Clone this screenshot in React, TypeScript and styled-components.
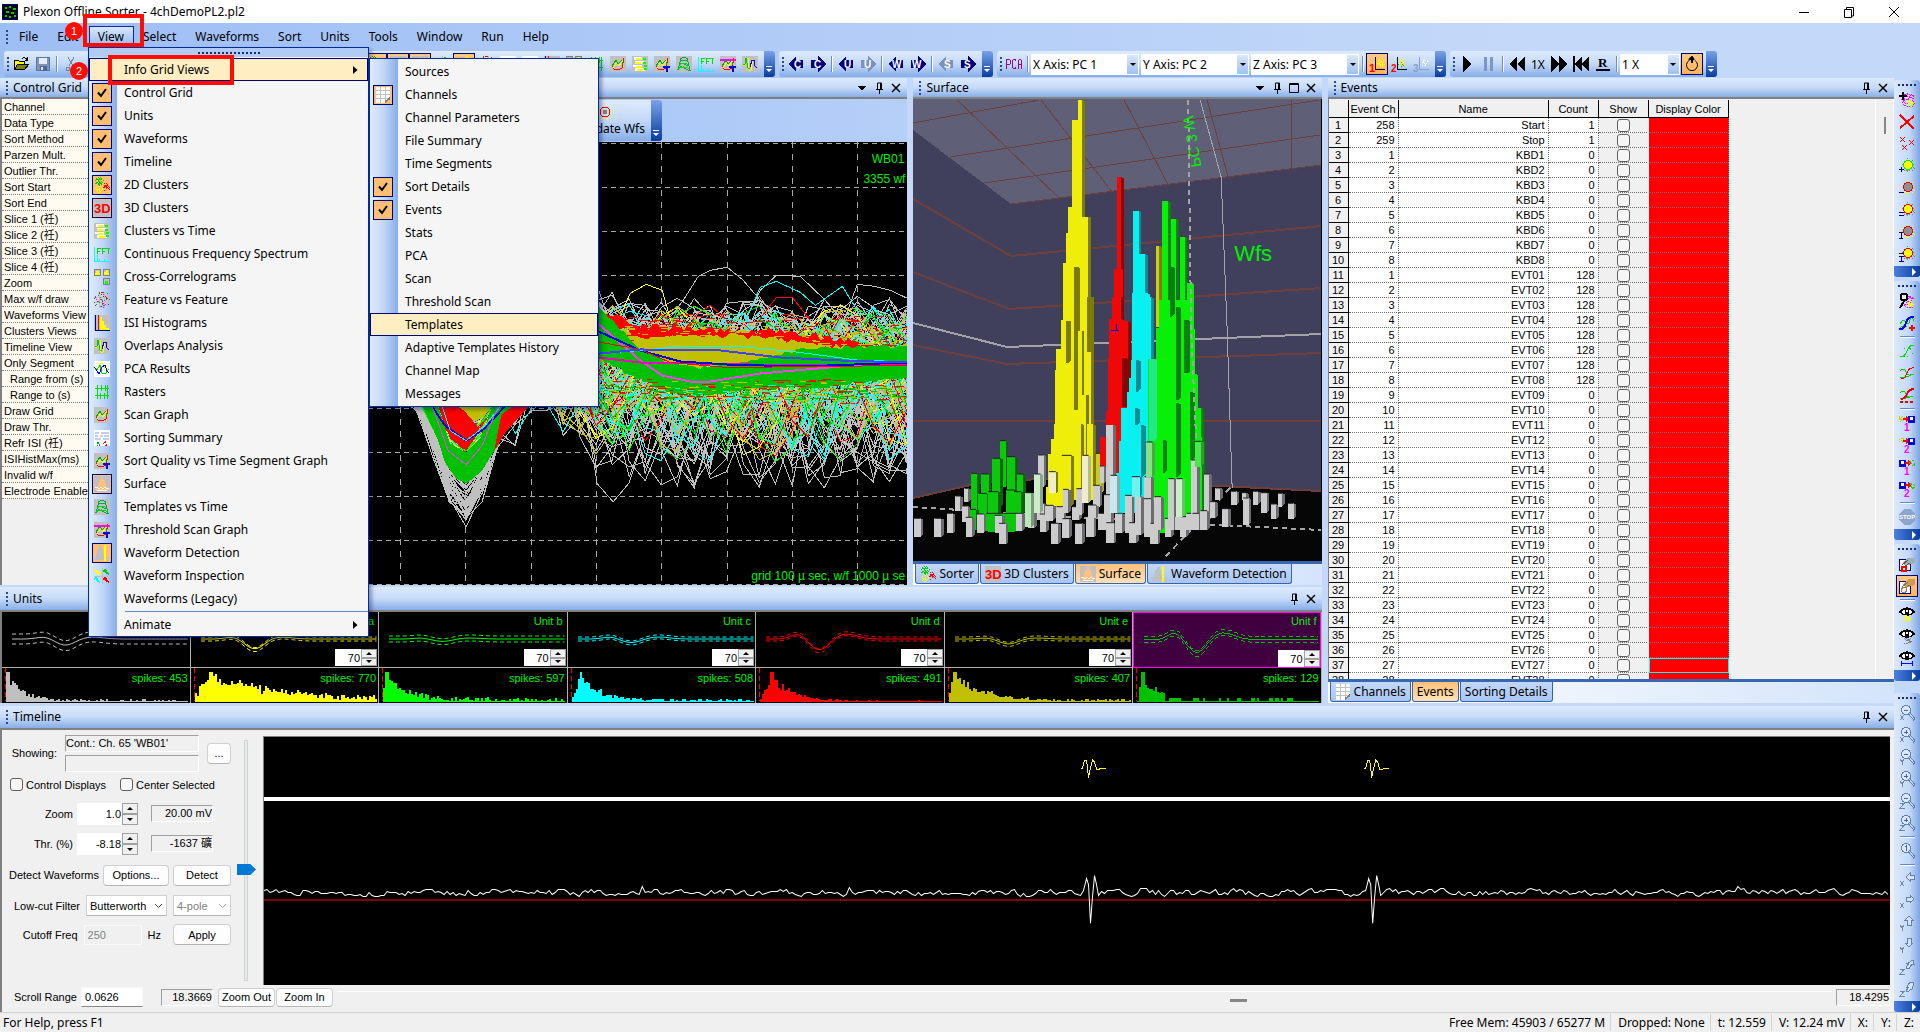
import React from "react";
import styled, { createGlobalStyle, css } from "styled-components";

const UI = `"Noto Sans", "Open Sans", sans-serif`;
const SANS = `"Liberation Sans", "Noto Sans CJK SC", sans-serif`;

const GlobalStyle = createGlobalStyle`
  * { box-sizing: border-box; }
  body { margin: 0; background: #c4d9f9; font-family: ${UI}; font-size: 12px; color: #000; overflow: hidden; }
  button, input, select { font: inherit; color: inherit; margin: 0; padding: 0; }
  button { border: 0; background: none; }
  h1, h2, ul, p { margin: 0; padding: 0; font-size: inherit; font-weight: 400; list-style: none; }
`;

/* ---------- seeded random numbers, so the traces are stable ---------- */
function rng(seed: number) {
  let s = seed >>> 0;
  return () => {
    s = (s + 0x6d2b79f5) >>> 0;
    let t = Math.imul(s ^ (s >>> 15), 1 | s);
    t = (t + Math.imul(t ^ (t >>> 7), 61 | t)) ^ t;
    return ((t ^ (t >>> 14)) >>> 0) / 4294967296;
  };
}

/* ---------- icons ---------- */
type Dot = [number, number];
const scatter = (seed: number, n: number, color: string, cx: number, cy: number, r: number) => {
  const rand = rng(seed);
  const pts: Dot[] = [];
  for (let i = 0; i < n; i++) {
    const a = rand() * 6.28;
    const d = Math.sqrt(rand()) * r;
    pts.push([Math.round(cx + Math.cos(a) * d), Math.round(cy + Math.sin(a) * d)]);
  }
  return <path key={color + seed} fill={color} d={pts.map(([x, y]) => `M${x} ${y}h1v1h-1z`).join("")} />;
};
const st = (d: string, stroke: string, w = 1) => <path key={d + stroke} d={d} stroke={stroke} strokeWidth={w} fill="none" />;
const fl = (d: string, fill: string) => <path key={d + fill} d={d} fill={fill} />;
const txt = (t: string, x: number, y: number, size: number, color: string) => (
  <text x={x} y={y} fontSize={size} fontWeight="bold" fontFamily="Liberation Sans, sans-serif" fill={color}>{t}</text>
);
const GREY = fl("M0 0h16v16H0z", "#c0c0c0");
const scanLines = <>{st("M2 9l2 4 4 1 4-2 2-10", "#f00")}{st("M2 10l4-6 2 4 4-4 1 5", "#0a0")}{st("M3 12l3-5 3 3 4-6", "#ff0")}</>;
const tMark = fl("M9 10h7v2h-2v4h-2v-4H9z", "#00f");
const lens = (mark: string) => (
  <>
    <circle cx="7" cy="5" r="4.500" fill="#dbe7f8" stroke="#5f7fb8" />
    {st("M10 8l6 7", "#5f7fb8", 3)}
    {st("M10 8l5 6", "#c5d7f2")}
    {st(mark, "#46659c")}
  </>
);
const letterX = st("M1 10l4 5M5 10l-4 5", "#6f86ae");
const letterY = st("M1 10l2 3 2-3M3.500 13v3", "#6f86ae");
const letterZ = st("M1 10.500h4l-4 4.500h5", "#6f86ae");
const arrowR = "M7 4h4V2l4 4-4 4V8H7z";
const arrowL = "M15 4h-4V2L7 6l4 4V8h4z";
const arrowU = "M8 10V5H6l4-4 4 4h-2v5z";
const arrowD = "M8 1v5H6l4 4 4-4h-2V1z";
const arrowZU = "M7 9l3-5H9l5-3 1 4h-2l-3 5z";
const pale = (d: string) => <path d={d} fill="#d8e1ee" stroke="#6080b4" />;
const disk = (x: number) => <>{fl(`M${x} 1h7v7h-7z`, "#00f")}{fl(`M${x + 2} 2h3v3h-3z`, "#fff")}{fl(`M${x + 2} 6h2v1h-2z`, "#000")}</>;
const blob = (ring: string, core: string, outer: string, mark: string) => (
  <>
    {scatter(4, 26, outer, 9, 7, 7)}
    <circle cx="9" cy="7" r="4.500" fill={core} stroke={ring} />
    {st(mark, "#000080")}
  </>
);
const eye = <>{st("M1 6q7-7 14 0q-7 6-14 0z", "#000", 2)}{fl("M2 6q6-5 12 0q-6 5-12 0z", "#fff")}{fl("M6 3h4v5H6z", "#000")}{fl("M7 4h2v2H7z", "#fff")}</>;

const ICONS: Record<string, React.ReactNode> = {
  app: <>{fl("M0 0h16v16H0z", "#000080")}{fl("M1 1h14v14H1z", "#000")}{fl("M3 3h2v2H3zM7 2h2v2H7zM11 4h3v2h-3zM4 7h3v2H4zM9 8h3v2H9zM3 11h2v2H3zM7 12h2v2H7zM12 11h2v2h-2z", "#0c0")}</>,
  open: <>{st("M1.500 13.500v-9h4l1 1h5v3", "#000")}{fl("M2 5h3l1 1h5v2H4l-2 4z", "#ff0")}<path d="M1.500 13.500l3-5h11l-4 5z" fill="#808000" stroke="#000" />{st("M9 2.500q3-2 5 1M14.500 1v3h-3", "#000")}</>,
  save: <><path d="M1.500 1.500h13v13h-13z" fill="#7f93b5" stroke="#5d74a0" />{fl("M4 2h8v6H4z", "#e3ecfa")}{fl("M5 10h7v5H5z", "#4e6794")}{fl("M6 11h2v3H6z", "#dce8fa")}</>,
  cut: <>{st("M5 1l5 9M11 1l-5 9", "#7086ac", 1)}{st("M3 11h3v3H3zM10 11h3v3h-3z", "#7086ac")}</>,
  clusters: <>{scatter(1, 34, "#0c0", 5, 4, 4)}{scatter(2, 30, "#f00", 11, 10, 4)}{scatter(3, 26, "#ff0", 5, 12, 4)}</>,
  three: <>{GREY}{txt("3D", 0, 13, 13, "#f00")}</>,
  clustime: <>{GREY}{fl("M2 1h8v3H2zM3 5h9v3H3zM1 9h9v2H1zM3 12h10v3H3z", "#fff")}{st("M4 2.500h5M3 6.500h6M4 10.500h6M5 13.500h6", "#ff0", 2)}{st("M11 3h3M11 7h3M12 10h3M12 13h3", "#0f0", 2)}</>,
  fft: <>{st("M.500 1v14.500H16M3.500 9v6M5.500 13v2M10.500 13v2", "#0ff")}{st("M3.500 8V2.500h3M3.500 5.500h2M8.500 8V2.500h3M8.500 5.500h2M12 2.500h4M14.500 2v6", "#0d0")}</>,
  cross: <>{fl("M0 0h7v7H0zM9 0h7v7H9zM9 9h7v7H9z", "#808080")}{fl("M1 1h5v5H1zM10 1h5v5h-5zM10 10h5v5h-5z", "#c0c0c0")}{fl("M1 4h1V2h3v2h1v2H1zM10 3h2V1h2v3h1v2h-5z", "#ff0")}{fl("M11 12h3v3h-3z", "#0f0")}</>,
  fvf: <>{st("M0 5.500h16M0 10.500h16M5.500 0v16M10.500 0v16", "#c0c0c0")}{scatter(5, 20, "#f00", 8, 8, 9)}{scatter(6, 20, "#0a0", 8, 8, 9)}{scatter(7, 14, "#f0f", 8, 8, 9)}</>,
  isi: <>{GREY}{st("M1.500 0v15.500H16", "#000080")}{fl("M6 2h2v4h2v4h2v3h3v2H6z", "#ff0")}{st("M4.500 0v15", "#f00")}</>,
  overlaps: <>{GREY}{st("M1 9h2l1-7h2l1 12h2l1-10 1 4", "#ff0")}{st("M1 8h2l1-6 2 10 2 1", "#0c0")}{st("M8 11l2-7h2l1 6 2 2", "#00f")}</>,
  pca: <>{fl("M0 0h16v16H0z", "#fff")}{st("M0 7h4l2-5 3 0 2 7", "#ff0")}{st("M1 8l2 1 3-5 2 8 3 1 4-5", "#0c0")}{st("M0 6l2 2 3 5 3-7 3-2 2 6 2 2", "#00f")}</>,
  rasters: <>{st("M1 4.500h14M1 11.500h14", "#0d0")}{st("M3.500 1v14M7.500 1v6M6.500 9v6M11.500 1v6M10.500 9v6M13.500 1v14", "#0d0")}</>,
  scan: <>{GREY}{scanLines}</>,
  summary: <>{fl("M0 0h16v16H0z", "#fff")}{st("M1 2.500h4M7 2.500h8M1 5.500h3M6 5.500h3M10 5.500h5M1 8.500h6M9 8.500h6", "#c0d0e8", 2)}{scatter(8, 10, "#0a0", 4, 13, 2)}{scatter(9, 10, "#f00", 11, 13, 2)}</>,
  sortq: <>{GREY}{scanLines}{tMark}</>,
  surface: <>{fl("M0 0h16v16H0z", "#c0c0c0")}{fl("M2 15v-4h2V7h1V4h2V1h2v3h2v3h1v4h2v4z", "#ffc080")}{st("M1 12l2-1 2 2 2-2 2 2 2-2 2 2 2-1M3 14h10", "#fff")}</>,
  templ: <>{GREY}{st("M5 3q3-3 6 0M4 6q4-4 8 0M3 10q2-4 5-2t5 2M1 14q3-5 7-2t7 2M5 2l-3 12M11 2l3 12", "#0a4")}{st("M4 9q4-4 8 0M2 13q5-4 12 0", "#0d0")}</>,
  thrscan: <>{GREY}{scanLines}{tMark}{st("M0 3.500h16", "#f0f", 2)}</>,
  wfdet: <>{fl("M0 15v-3h2V9h1V4h2V1h3v3h1v5h2v3h1v3z", "#c0c0c0")}{st("M10.500 0v16", "#ff0", 2)}{st("M12 12h2v3h-2z", "#c0c0c0")}</>,
  inspect: <>{st("M0 8.500h16M8.500 0v16", "#c0c0c0")}{st("M0 2l2 1 2 3 2-2", "#ff0", 2)}{st("M9 4l2-2 2 3 2 1", "#0c0", 2)}{st("M0 11l2-1 2 3 2 1", "#0ff", 2)}{st("M9 12l2-2 2 3 2 1", "#f00", 2)}</>,
  sheet: <>{fl("M1 0h14v11l-5 5H1z", "#fff")}{st("M1 3.500h14M1 7.500h14M1 11.500h14M5.500 0v16M10.500 0v16", "#c0c0c0")}{st("M10 15l5-4", "#808080", 2)}</>,
  pcaText: <>{st("M.500 13V3.500h3l1 1v3l-1 1h-3M10 4.500l-1-1H7.500l-1 1v7l1 1H9l1-1M12.500 13V4.500l1-1h1l1 1V13M12.500 8.500h3", "#a000a0")}</>,
  play: fl("M4 0l9 8-9 8z", "#000"),
  pause: fl("M3 1h3v14H3zM9 1h3v14H9z", "#7c95c4"),
  rewind: fl("M8 0v16L0 8zM16 0v16L8 8z", "#000"),
  forward: fl("M0 0v16l8-8zM8 0v16l8-8z", "#000"),
  start: fl("M0 0h2v16H0zM9 0v16L2 8zM16 0v16L9 8z", "#000"),
  rec: <><text x="3" y="11" fontSize="13" fontWeight="bold" fontFamily="Liberation Serif, serif">R</text>{fl("M1 13h14v2H1z", "#000")}</>,
  loop: <g shapeRendering="auto">{st("M5 4.500A5.500 5.500 0 1 0 11 4.500", "#000", 1)}{st("M8 7V2M5 4l3-3 2 3", "#000", 2)}</g>,
  ax1: <>{st("M6.500 1v12.500H16", "#000")}{scatter(21, 34, "#ff0", 12, 6, 4)}{txt("1", 0, 16, 11, "#f00")}</>,
  ax2: <>{st("M6.500 1v12.500H16", "#000")}{scatter(22, 20, "#ff0", 11, 6, 4)}{scatter(23, 5, "#0c0", 11, 8, 4)}{txt("2", 0, 16, 10, "#f00")}</>,
  ax3: <>{st("M6.500 1v12.500H16", "#8aa0c8")}{scatter(24, 16, "#fff", 11, 6, 4)}{txt("3", 0, 16, 10, "#8aa0c8")}</>,
  addUnit: <>{scatter(31, 50, "#f0f", 9, 8, 7)}{scatter(32, 28, "#ff0", 11, 11, 3)}{fl("M3 0h2v3h3v2H5v3H3V5H0V3h3z", "#000")}</>,
  del: st("M1 1l14 14M15 2L1 14", "#f00", 2),
  delAll: <>{st("M1 1l5 5M6 1L1 6M10 4l5 5M15 4l-5 5M3 9l5 5M8 9l-5 5", "#e00")}</>,
  b1: blob("#0e0", "#ff0", "#808080", "M0 11.500h5M2.500 9v5"),
  b2: blob("#e00", "#909090", "#ff0", "M0 12.500h5"),
  b3: blob("#e00", "#ff0", "#808080", "M0 10.500h5M0 13.500h5"),
  b4: blob("#e00", "#909090", "#ff0", "M0 8.500h4M2 9v5M0 14.500h4"),
  b5: blob("#e00", "#ff0", "#808080", "M0 7.500h5M0 10.500h5M2.500 10v5M0 15.500h5"),
  findUnit: <>{scatter(33, 40, "#f0f", 10, 9, 6)}{scatter(34, 24, "#ff0", 11, 11, 3)}<circle cx="5" cy="4" r="3.500" fill="#eee" stroke="#000" strokeWidth="2" />{st("M5 8l-4 7", "#000", 2)}</>,
  wfAdd: <>{st("M1 9q3-6 6-2t4-2 4 1", "#0c0")}{st("M1 13q4-4 7-1", "#0c0")}{st("M0 14q5 1 7-6t8-6", "#00f", 2)}{st("M10 12.500h6M13 10v6", "#f00", 2)}</>,
  wf1: <>{st("M1 14q5 0 7-6t7-6", "#0d0")}{scatter(41, 10, "#0d0", 8, 8, 6)}</>,
  wf2: <>{st("M1 6q4-4 6 1t7 2M1 13q5 0 9-2t5-1", "#0c0")}{st("M2 14q4 0 6-6t7-5", "#e00")}</>,
  wf3: <>{st("M1 6q4-4 6 1t7 2M1 12q5 0 9-2", "#0c0")}{st("M2 12q4 0 6-5t7-5M1 14.500h3M6 14.500h3M11 14.500h3", "#e00", 2)}</>,
  out1: <>{scatter(51, 14, "#cc0", 2, 3, 3)}{fl("M4 3h3V1l3 3-3 3V5H4z", "#f00")}{disk(9)}{txt("1", 5, 16, 10, "#f0f")}</>,
  out2: <>{scatter(52, 14, "#cc0", 2, 3, 3)}{fl("M4 3h3V1l3 3-3 3V5H4z", "#f00")}{disk(9)}{txt("2", 5, 16, 10, "#f0f")}</>,
  in1: <>{disk(0)}{fl("M6 3h3V1l3 3-3 3V5H6z", "#f00")}{scatter(53, 16, "#3c0", 13, 4, 3)}{txt("1", 5, 16, 10, "#f0f")}</>,
  in2: <>{disk(0)}{fl("M6 3h3V1l3 3-3 3V5H6z", "#f00")}{scatter(54, 16, "#3c0", 13, 4, 3)}{txt("2", 5, 16, 10, "#f0f")}</>,
  stop: <>{fl("M5 0h6l5 5v6l-5 5H5l-5-5V5z", "#8da4cc")}{txt("STOP", 0, 10, 6, "#fff")}</>,
  prop1: <><path d="M.500 3.500h11v11H.500z" fill="#fff" stroke="#000080" />{fl("M3 7l5-5h8v5l-4 1-5 2z", "#9fb0b0")}{st("M3 9l6-5M6 10l5-3", "#555")}<circle cx="5" cy="13" r="2.500" fill="#fff" stroke="#f00" strokeWidth="2" /></>,
  prop2: <><path d="M.500 3.500h11v12H.500z" fill="#fff" stroke="#000080" />{fl("M4 6l5-5h7v6l-4 1-5 2z", "#d29a50")}{st("M3 9l6-5M6 10l5-3", "#777")}<circle cx="5" cy="12" r="2.500" fill="#eed" stroke="#976" /></>,
  eye1: <>{eye}{scatter(61, 36, "#ff0", 7, 13, 4)}</>,
  eye2: <>{eye}{scatter(62, 26, "#808080", 8, 13, 5)}</>,
  eye3: <>{eye}{st("M2.500 11v5M13.500 11v5M2 13.500h12", "#00f")}</>,
  zxo: <>{lens("M5 5.500h4")}{letterX}</>,
  zxi: <>{lens("M5 5.500h4M7.500 3v4")}{letterX}</>,
  zyo: <>{lens("M5 5.500h4")}{letterY}</>,
  zyi: <>{lens("M5 5.500h4M7.500 3v4")}{letterY}</>,
  zzo: <>{lens("M5 5.500h4")}{letterZ}</>,
  zzi: <>{lens("M5 5.500h4M7.500 3v4")}{letterZ}</>,
  z1: <>{lens("M7.500 2v6M6 3.500h1")}</>,
  mxl: <>{pale(arrowL)}{letterX}</>,
  mxr: <>{pale(arrowR)}{letterX}</>,
  myu: <>{pale(arrowU)}{letterY}</>,
  myd: <>{pale(arrowD)}{letterY}</>,
  mzu: <>{pale(arrowZU)}{letterZ}</>,
  mzd: <>{pale("M11 1l-3 5h2l-3 4 1 1 5-3 2-6z")}{letterZ}</>,
  inval: <>{scatter(71, 30, "#ff0", 8, 8, 8)}<circle cx="8" cy="8" r="5" fill="#ddd" stroke="#e00" />{fl("M6 6h4v4H6z", "#808080")}</>,
};
["C", "U", "W", "S"].forEach((l) => {
  const make = (right: boolean, color: string) => (
    <>
      {fl(right ? "M1 4h7V0l8 8-8 8v-4H1z" : "M15 4H8V0L0 8l8 8v-4h7z", color)}
      {txt(l, (l === "W" ? 4 : 6) - (right ? 2 : 0), 12, 10, "#fff")}
    </>
  );
  ICONS["l" + l] = make(false, l === "S" ? "#7d91bf" : "#000080");
  ICONS["r" + l] = make(true, l === "U" ? "#7d91bf" : "#000080");
});

const Glyph = styled.svg`display: block; flex: none; width: 16px; height: 16px;`;
const Icon = ({ name }: { name: string }) => (
  <Glyph viewBox="0 0 16 16" shapeRendering="crispEdges" aria-hidden="true">{ICONS[name]}</Glyph>
);

/* ---------- frame ---------- */
const Page = styled.div`position: relative; display: flex; flex-direction: column; height: 100vh; overflow: hidden;`;
const TitleBar = styled.header`
  display: flex; align-items: center; height: 23px; flex: none; background: #fff; padding: 0 20px 0 2px; gap: 5px;
  h1 { flex: 1; font-size: 12px; }
`;
const WindowButtons = styled.div`display: flex; gap: 33px;`;
const WinButton = styled.button`width: 12px; height: 20px; svg { display: block; width: 12px; height: 12px; }`;
const Grip = styled.span<{ $wide?: boolean }>`
  flex: none; width: 2px; height: 14px;
  background: repeating-linear-gradient(#2b4a86 0 2px, transparent 2px 4px);
  ${(p) => p.$wide && css`
    width: 18px; height: 2px;
    background: repeating-linear-gradient(90deg, #16306a 0 2px, transparent 2px 4px);
  `}
`;
const MenuBar = styled.nav`
  display: flex; align-items: center; flex: none; height: 28px; padding: 0 6px;
  background: linear-gradient(90deg, #9dbdf5, #c4d9f9 80%);
  > ${Grip} { margin-right: 2px; }
`;
const MenuButton = styled.button<{ $open?: boolean }>`
  height: 23px; padding: 0 9px 0 8px; border: 1px solid transparent; line-height: 20px;
  ${(p) => p.$open && css`border-color: #002d96; background: linear-gradient(#d9e7fc, #8fb3ec);`}
`;
const ToolRow = styled.div`
  display: flex; flex: none; height: 27px; padding-left: 4px; gap: 4px;
  background: linear-gradient(90deg, #9dbdf5, #c4d9f9 80%);
`;
const ToolBar = styled.div<{ $grow?: boolean }>`
  display: flex; align-items: center; gap: 6px; height: 26px; padding-left: 3px;
  border-radius: 3px; background: linear-gradient(#deebfd, #c3d8f7 50%, #86aee8);
  ${(p) => p.$grow && css`flex: 0 0 771px;`}
  > ${Grip} { margin-right: -2px; }
`;
const Spring = styled.span`flex: 1;`;
const ToolButton = styled.button<{ $on?: boolean }>`
  display: flex; flex: none; align-items: center; justify-content: center; width: 22px; height: 22px; margin: 0 -3px;
  border: 1px solid ${(p) => (p.$on ? "#000080" : "transparent")};
  background: ${(p) => (p.$on ? "linear-gradient(#ffc987, #ffb35c)" : "none")};
`;
const ToolSep = styled.span`flex: none; width: 2px; height: 16px; margin: 0 -1px; background: linear-gradient(90deg, #6a8ccb 50%, #fff 50%);`;
const MoreButton = styled.button`
  flex: none; align-self: stretch; width: 11px; display: flex; align-items: flex-end; justify-content: center; padding-bottom: 4px;
  background: linear-gradient(#79a2ea, #0a3d9c); border-radius: 0 3px 3px 0;
  svg { width: 7px; height: 7px; }
`;
const More = () => (
  <MoreButton aria-label="Toolbar options"><svg viewBox="0 0 7 7"><path d="M0 0h6v1H0zM0 3h6l-3 3z" fill="#fff" /></svg></MoreButton>
);
const Combo = styled.label<{ $w: number; $end?: boolean }>`
  display: flex; flex: none; width: ${(p) => p.$w}px; height: 21px; background: #fff; align-items: center;
  margin-right: ${(p) => (p.$end ? -2 : -4)}px;
  ${ToolSep} + & { margin-left: -3px; }
  select { appearance: none; flex: 1; min-width: 0; border: 0; background: none; padding-left: 2px; outline: 0; }
`;
const ComboArrow = styled.span`
  display: flex; align-items: center; justify-content: center; width: 11px; height: 19px; margin-right: 1px;
  background: linear-gradient(#d9e8fc, #9fc0ef);
  &::after { content: ""; border: 3px solid transparent; border-top-color: #000; border-bottom: 0; }
`;
const ToolCombo = ({ w, label, value, end }: { w: number; label: string; value: string; end?: boolean }) => (
  <Combo $w={w} $end={end}><select aria-label={label} defaultValue={value}><option>{value}</option></select><ComboArrow /></Combo>
);

/* ---------- docking panels ---------- */
const Workspace = styled.div`flex: 1; min-height: 0; display: grid; grid-template-columns: minmax(0, 1fr) 26px;`;
const Docks = styled.main`display: flex; flex-direction: column; min-height: 0;`;
const Upper = styled.div`
  flex: 1; min-height: 0; display: grid; grid-template-columns: minmax(0, 70fr) minmax(0, 30fr); gap: 6px; padding-bottom: 3px;
`;
const LeftDock = styled.div`display: flex; flex-direction: column; gap: 2px; min-height: 0;`;
const DockRow = styled.div`
  flex: 1; min-height: 0; display: grid; gap: 6px; grid-template-columns: 200px minmax(0, 701fr) minmax(0, 408fr);
`;
const Panel = styled.section`display: flex; flex-direction: column; min-height: 0; min-width: 0;`;
const CaptionBar = styled.header<{ $h: number }>`
  display: flex; align-items: center; gap: 5px; flex: none; height: ${(p) => p.$h}px; padding: 0 5px 0 6px;
  border-bottom: 2px solid #808080; background: linear-gradient(#dce9fc, #c6dbf8 50%, #88aee8);
  h2 { flex: 1; line-height: 18px; }
`;
const CaptionButton = styled.button`width: 12px; height: 14px; svg { display: block; width: 12px; height: 14px; }`;
const CAPTION_PATHS: Record<string, string> = {
  Menu: "M2 5.500h8M3 6.500h6M4 7.500h4M5 8.500h2",
  Pin: "M4.500 8V2h4v6M7.500 2v6M3 8.500h7M6.500 9v4",
  Maximize: "M1.500 2.500h9v9h-9zM1 3.500h10",
  Close: "M2 3l8 8M10 3l-8 8",
};
const Caption = ({ title, tools, h = 21 }: { title: string; tools: string[]; h?: number }) => (
  <CaptionBar $h={h}>
    <Grip /><h2>{title}</h2>
    {tools.map((t) => (
      <CaptionButton key={t} aria-label={t}>
        <svg viewBox="0 0 12 14"><path d={CAPTION_PATHS[t]} stroke="#000" strokeWidth={t === "Close" ? 1.5 : 1} fill="none" /></svg>
      </CaptionButton>
    ))}
  </CaptionBar>
);

const PropertyList = styled.ul`
  flex: 1; background: #f0f0f0; border-left: 2px solid #808080; font: 11px/15px ${SANS};
`;
const Property = styled.li<{ $sub?: boolean }>`
  height: 16px; padding-top: 1px; padding-left: ${(p) => (p.$sub ? 8 : 2)}px; background: #fffbf0; border-bottom: 1px dotted #808080; white-space: nowrap;
`;
const PROPERTIES = ["Channel", "Data Type", "Sort Method", "Parzen Mult.", "Outlier Thr.", "Sort Start", "Sort End", "Slice 1 (祍)", "Slice 2 (祍)", "Slice 3 (祍)", "Slice 4 (祍)", "Zoom", "Max w/f draw", "Waveforms View", "Clusters Views", "Timeline View", "Only Segment", "Range from (s)", "Range to (s)", "Draw Grid", "Draw Thr.", "Refr ISI (祍)", "ISIHistMax(ms)", "Invalid w/f", "Electrode Enable"];

const WaveTools = styled.div`
  flex: none; display: flex; height: 43px; padding-top: 1px; background: linear-gradient(90deg, #9dbdf5, #b5cff8);
`;
const WaveToolBar = styled.div`
  display: flex; align-items: flex-end; justify-content: flex-end; width: 456px; height: 41px; border-radius: 3px;
  background: linear-gradient(#deebfd, #c3d8f7 50%, #86aee8);
`;
const BigButton = styled.button`
  display: flex; flex-direction: column; align-items: center; justify-content: center; align-self: stretch; padding: 0 6px;
`;
const Plot = styled.svg`display: block; flex: 1; width: 100%; min-height: 0; background: #000;`;

/* ---------- waveform plot ---------- */
const STEP = 16.3;
const trough = (x: number, depth: number) => depth * Math.exp(-Math.pow((x - 466) / 38, 2)) - depth * 0.35 * Math.exp(-Math.pow((x - 550) / 42, 2));
const WaveformPlot = () => {
  const r = rng(77);
  const xs: number[] = [];
  for (let x = 351.5; x < 925; x += STEP) xs.push(x);
  const trace = (up: number, down: number, depth: number, base: number) => {
    let phase = r() * 6.28;
    const f = 0.5 + r() * 0.5;
    let a = 0.3 + r() * 0.5;
    return xs.map((x) => {
      phase += f + (r() - 0.5) * 0.5;
      a += (r() - 0.5) * 0.22;
      a = Math.min(1.1, Math.max(0.25, a));
      const grow = x < 500 ? 0.25 : x < 560 ? 0.7 : 1;
      const s = Math.sin(phase) * a;
      return `${x.toFixed(0)},${(base + trough(x, depth) + grow * (s > 0 ? s * down : s * up)).toFixed(0)}`;
    }).join(" ");
  };
  const lines: [string, string][] = [];
  for (let i = 0; i < 105; i++) lines.push([trace(62, 112, 60 + r() * 92, 364), "#c0c0c0"]);
  const tints = ["#00ffff", "#ffff00", "#ff0000", "#c0c000", "#00c000", "#00ffff", "#00ff00", "#c0c0c0"];
  for (let i = 0; i < 80; i++) lines.push([trace(54, 88, 40 + r() * 60, 364), tints[i % tints.length]]);
  const band = (top: Dot[], bottom: Dot[], jag: number) => {
    const walk = (pts: Dot[]) => {
      const out: string[] = [];
      for (let i = 0; i < pts.length - 1; i++) {
        const n = Math.max(2, Math.round(Math.abs(pts[i + 1][0] - pts[i][0]) / 4));
        for (let k = 0; k < n; k++) {
          const t = k / n;
          out.push(`${(pts[i][0] + (pts[i + 1][0] - pts[i][0]) * t).toFixed(0)},${(pts[i][1] + (pts[i + 1][1] - pts[i][1]) * t + (r() - 0.5) * jag).toFixed(0)}`);
        }
      }
      const end = pts[pts.length - 1];
      out.push(`${end[0]},${end[1]}`);
      return out;
    };
    return walk(top).concat(walk([...bottom]).reverse()).join(" ");
  };
  const verticals = [270, 335, 400, 465, 531, 596, 661, 727, 792, 857];
  const horizontals = [143, 187, 231, 275, 319, 363, 407, 451, 495, 539, 583];
  const speckle = (n: number, color: string, y0: number, y1: number) => {
    let d = "";
    for (let i = 0; i < n; i++) d += `M${(600 + r() * 307).toFixed(0)} ${Math.floor(y0 + r() * (y1 - y0))}.5h${2 + Math.floor(r() * 9)}`;
    return <path d={d} stroke={color} />;
  };
  return (
    <Plot viewBox="206 142 701 442" preserveAspectRatio="none" shapeRendering="crispEdges" role="img" aria-label="Waveforms of WB01">
      {horizontals.map((y) => <path key={y} d={`M206 ${y}.5H907`} stroke="#a8a8a8" strokeDasharray="5 4" />)}
      {verticals.map((x) => <path key={x} d={`M${x}.5 142V584`} stroke="#a8a8a8" strokeDasharray="6 6" />)}
      <g fill="none">
        {lines.map(([p, c], i) => <polyline key={i} points={p} stroke={c} />)}
        <polyline points="580,380 590,440 597,483 613,501 629,482 640,448 647,465 661,484 677,476 690,440" stroke="#c0c0c0" />
        <polyline points="660,330 683,300 698,276 710,270 727,267 743,280 760,300 775,330" stroke="#c0c0c0" />
        <polyline points="740,330 760,290 776,275 800,276 825,300 850,330" stroke="#c0c0c0" />
        <polyline points="840,330 857,284 874,286 890,290 907,298" stroke="#c0c0c0" />
        <polyline points="745,320 760,287 776,281 800,292 815,305 842,286 860,315" stroke="#0ff" />
        <polyline points="610,340 630,293 646,284 662,290 672,325" stroke="#ff0" />
        <polyline points="760,318 776,297 792,297 810,320" stroke="#f00" />
      </g>
      <polygon fill="#c0c000" points={band([[600, 330], [640, 330], [700, 328], [780, 332], [850, 344], [907, 350]], [[600, 360], [660, 366], [780, 366], [907, 362]], 6)} />
      <polygon fill="#f00" points={band([[600, 310], [640, 326], [720, 329], [800, 333], [860, 343]], [[600, 318], [640, 336], [720, 335], [800, 341], [860, 349]], 9)} />
      {speckle(150, "#f00", 314, 346)}
      {speckle(120, "#c0c000", 325, 346)}
      <polygon fill="#c0c000" points={band([[636, 338], [700, 335], [760, 337], [830, 347]], [[640, 362], [700, 364], [760, 364], [830, 350]], 5)} />
      <polygon fill="#00c000" points="420,400 436,400 450,443 466,452 482,436 500,400 516,400 498,445 484,465 474,477 466,483 456,478 445,462 438,440" />
      <polygon fill="#c0c000" points="445,398 498,398 482,418 464,424 452,414" />
      <polygon fill="#f00" points="436,400 450,438 466,450 480,430 520,400 534,400 505,432 494,450 476,424 464,410 448,400" />
      <polygon fill="#00c000" points={band([[590, 298], [600, 306], [612, 320], [640, 347], [665, 362], [700, 368], [760, 358], [800, 349], [860, 346], [907, 346]], [[590, 350], [605, 362], [640, 378], [670, 393], [700, 395], [760, 389], [830, 386], [907, 377]], 4)} />
      <polygon fill="#00c000" points="478,444 494,400 504,400 494,450 482,470 466,483" />
      {speckle(110, "#c0c000", 380, 400)}
      {speckle(90, "#f00", 378, 402)}
      {speckle(110, "#00c000", 384, 400)}
      {speckle(50, "#0ff", 384, 402)}
      <g fill="none">
        <polyline points="428,400 445,425 466,440 484,428 510,400" stroke="#0000e0" strokeWidth="2" />
        <polyline points="440,400 450,430 466,440 484,426 505,400" stroke="#0ff" />
        <polyline points="430,400 448,450 466,464 482,445 500,400" stroke="#f040f0" />
        <polyline points="590,312 600,325 640,360 662,375 690,381 710,381 760,373 840,366 907,362" stroke="#f040f0" strokeWidth="2" />
        <polyline points="590,356 640,362 700,363 800,365 907,363" stroke="#f000c0" strokeWidth="2" />
        <polyline points="590,328 605,334 640,350 680,361 727,364 800,366 907,362" stroke="#0000e0" strokeWidth="2" />
        <polyline points="590,340 640,349 670,362 727,367 907,365" stroke="#f00" />
        <polyline points="590,354 640,350 680,346 740,346 800,352 860,360 907,361" stroke="#00ffff" />
        <polyline points="590,354 640,349 720,350 780,357 840,360 907,362" stroke="#4040ff" strokeWidth="2" />
      </g>
      <g fill="#00f000" fontFamily="Liberation Sans, sans-serif" fontSize="12">
        <text x="904" y="163" textAnchor="end">WB01</text>
        <text x="905" y="183" textAnchor="end">3355 wf</text>
        <text x="751" y="579">grid 100 µ sec, w/f 1000 µ se</text>
      </g>
    </Plot>
  );
};

/* ---------- 3D surface plot; column data is [x, top, width, bottom, face, side] ---------- */
type Column = [number, number, number, number, string, string];
const Y1 = "#eeee0a", Y2 = "#7c7a08", R1 = "#f00808", R2 = "#8c0404", C1 = "#08f0f0", C2 = "#0a8c94", G1 = "#08f008", G2 = "#088010", D1 = "#0cc80c", D2 = "#086408", W1 = "#cccccc", W2 = "#6c6c70";
const COLUMNS: Column[] = [
  [494, -600, 14, 600, Y1, Y2], [476, -540, 18, 600, Y1, Y1], [464, -280, 14, 600, Y1, Y1], [458, -200, 12, 600, Y1, Y1], [450, -110, 20, 600, Y1, Y1],
  [508, -250, 18, 600, Y1, Y2], [522, -10, 14, 600, Y2, Y2], [444, 60, 20, 600, Y1, Y1], [430, 148, 34, 610, Y1, Y1], [427, 210, 30, 610, Y1, Y1],
  [460, 62, 6, 190, Y2, Y2], [424, 372, 26, 612, Y1, Y1], [414, 417, 30, 614, Y1, Y1], [406, 463, 30, 616, Y1, Y1], [400, 562, 48, 620, Y1, Y1], [484, -100, 8, 330, Y2, Y2], [494, 92, 12, 610, Y1, Y2],
  [520, 156, 14, 600, Y1, Y2], [508, 284, 12, 600, Y1, Y2], [522, 372, 18, 600, Y1, Y2], [487, 372, 18, 600, Y1, Y2], [446, 466, 28, 618, Y1, Y2], [548, 460, 16, 580, "#c8c830", "#a8a830"],
  [612, -369, 12, 540, R1, R2], [603, -93, 20, 540, R1, R1], [598, -10, 26, 540, R1, R2], [588, 58, 36, 540, R1, R1], [631, 64, 14, 500, R1, R2], [585, 180, 50, 540, R1, R1], [628, 175, 12, 320, R2, R2], [578, 334, 50, 540, R1, R1], [562, 412, 60, 545, R1, R1],
  [660, -267, 17, 630, C1, C2], [678, -138, 18, 630, C1, C2], [658, -20, 44, 630, C1, C1], [698, -9, 16, 630, C1, C2], [654, 180, 54, 636, C1, C1], [648, 235, 60, 636, C1, C1], [641, 275, 60, 636, C1, C1], [624, 325, 80, 636, C1, C1], [618, 424, 90, 636, C1, C1], [610, 520, 100, 640, C1, C1], [670, 180, 5, 275, C2, C2], [684, 375, 6, 530, C2, C2], [666, 325, 6, 375, C2, C2],
  [729, -162, 10, 82, "#cccc10", Y2], [747, -297, 18, 600, G1, G2], [774, -243, 16, 640, G1, G2], [800, -189, 16, 640, G1, G2], [822, -51, 14, 640, G1, G1], [738, 0, 98, 640, G1, G1], [728, 84, 110, 650, G1, G1], [706, 178, 130, 655, G1, G1], [707, 178, 16, 424, "#22e888", "#22e888"], [834, 222, 12, 640, G1, G1], [846, 324, 18, 640, G1, G2], [842, 412, 26, 640, G1, G2], [788, 20, 7, 300, G2, G2], [812, 60, 12, 220, G2, G2], [772, -100, 5, 50, G2, G2], [790, 310, 5, 530, G2, G2], [832, 275, 5, 480, G2, G2], [750, 420, 4, 520, G2, G2], [742, 640, 20, 700, G1, G1],
  [260, 422, 18, 560, D1, D2], [238, 475, 24, 620, D1, D2], [282, 470, 24, 630, D1, D2], [205, 522, 22, 630, D1, D2], [174, 520, 18, 640, D1, D2], [313, 522, 18, 640, D1, D2], [196, 580, 26, 690, D1, D2], [226, 575, 30, 695, D1, D2], [280, 570, 24, 695, D1, D2], [304, 575, 20, 690, D1, D2], [163, 628, 26, 690, D1, D2], [220, 640, 90, 692, D1, D2],
];
const WHITE_COLUMNS: Column[] = ([
  [154, 565, 12, 605], [127, 588, 14, 632], [148, 618, 16, 665], [3, 655, 20, 712], [64, 655, 20, 712], [101, 640, 18, 700], [158, 652, 20, 710], [192, 642, 20, 698], [245, 646, 22, 698], [258, 670, 20, 733], [308, 640, 20, 692], [345, 630, 18, 685],
  [376, 465, 16, 560], [372, 610, 22, 660], [380, 642, 20, 697], [396, 616, 24, 662], [430, 620, 22, 668], [414, 670, 22, 733], [450, 568, 16, 640], [448, 656, 20, 715], [476, 620, 22, 660], [490, 566, 16, 645], [485, 670, 22, 733], [520, 650, 22, 712], [540, 556, 20, 620], [525, 615, 24, 655], [556, 640, 26, 690], [560, 498, 12, 550], [580, 374, 20, 640], [574, 584, 20, 690], [580, 668, 22, 730], [606, 640, 22, 700], [636, 586, 20, 700], [648, 668, 22, 730], [666, 588, 18, 705], [694, 530, 20, 600], [692, 596, 22, 712], [712, 670, 22, 733], [724, 590, 20, 690], [755, 655, 20, 712], [766, 536, 18, 690], [786, 648, 20, 690], [802, 650, 18, 712], [820, 640, 20, 690], [834, 480, 18, 660], [838, 640, 20, 690], [872, 522, 16, 660], [862, 632, 20, 690], [890, 605, 16, 655], [907, 564, 14, 600], [928, 626, 18, 680], [954, 574, 16, 614], [985, 578, 14, 600], [990, 594, 16, 675], [1018, 574, 16, 614], [1042, 578, 18, 638], [1072, 612, 16, 658], [1095, 580, 12, 620], [1125, 610, 16, 656],
] as [number, number, number, number][]).map(([x, y, w, b]) => [x, y, w, b, W1, W2]);
const TINTED: Column[] = [
  [364, 522, 18, 640, "#cceccc", "#8aa88a"], [337, 578, 18, 680, "#b8e8b8", "#7a9a7a"], [408, 515, 20, 580, "#eeeecc", Y2], [508, 466, 18, 610, "#eeeecc", "#b8b890"], [592, 526, 20, 640, "#c8e8ec", "#88a8ac"], [656, 530, 24, 590, "#70f0f0", C2], [700, 426, 18, 530, "#88e088", "#48a848"], [790, 536, 18, 650, "#c8f0c8", "#70c070"], [846, 424, 18, 500, "#48e848", "#28a028"],
];
const SurfacePlot = () => (
  <Plot viewBox="914 99 408 462" preserveAspectRatio="none" shapeRendering="crispEdges" role="img" aria-label="Surface view of the clusters">
    <rect x="914" y="99" width="408" height="462" fill="#41405c" />
    <path d="M914 130L1012 204L1322 165V99H914z" fill="#605f78" />
    <path d="M914 498L985 482L1060 478L1200 485L1322 491V561H914z" fill="#060607" />
    <g fill="none" stroke="#6f3f3c" strokeWidth="1">
      <path d="M914 123L1040 100M951 157L1320 100M985 183L1321 135M1012 204L1322 165M958 100L1060 198M1042 100L1113 192M1125 100L1169 185M1208 100L1229 177M1292 100V169" />
      <path d="M914 199L1012 256L1322 226M914 272L1010 309L1322 288M914 345L1008 364L1322 353M914 421H1322M914 498L985 482L1060 478M1200 485L1322 491" strokeWidth="2" />
    </g>
    <g fill="none" stroke="#a4a4a8">
      <path d="M914 323L1008 347L1322 334" strokeWidth="2" />
      <path d="M1201 100L1222 177L1228 330L1233 488" />
      <path d="M914 507L1040 515L1200 524L1322 530" strokeWidth="2" strokeDasharray="5 4" />
      <path d="M1231 488L1166 557" strokeWidth="2" strokeDasharray="6 5" />
    </g>
    <g transform="translate(914 300) scale(.33333)">
      {[...COLUMNS, ...WHITE_COLUMNS, ...TINTED].map(([x, y, w, b, face, side], i) => (
        <g key={i}>
          <path d={`M${x + w} ${y}l8 3V${b - 8}l-8 8z`} fill={side} />
          <rect x={x} y={y} width={w} height={b - y} fill={face} />
          {b - y < 190 && face !== side && <path d={`M${x} ${y}h${w}`} stroke="#222" strokeWidth="3" />}
        </g>
      ))}
      <path d="M595 92h22M610 72v18" stroke="#00f" strokeWidth="5" />
    </g>
    <path d="M1189 100L1192 330L1197 440" stroke="#a4a4a8" strokeWidth="2" strokeDasharray="5 4" fill="none" />
    <g fill="#00f000" fontFamily="Liberation Sans, sans-serif">
      <text x="1235" y="261" fontSize="22">Wfs</text>
      <text transform="translate(1184 117) rotate(81) scale(-1 1)" fontSize="15" textAnchor="end">PC 3 W</text>
    </g>
  </Plot>
);

/* ---------- tabs ---------- */
const Tabs = styled.div`
  flex: none; display: flex; align-items: stretch; height: 24px; padding-left: 2px; border-top: 3px solid #3767b0;
  background: linear-gradient(90deg, #fff, #d4e4fb); gap: 1px; position: relative;
`;
const Tab = styled.button<{ $on?: boolean }>`
  display: flex; align-items: center; gap: 3px; height: 20px; padding: 0 4px; border: 1px solid #3a62a8; border-top: 0; border-radius: 0 0 3px 3px;
  background: ${(p) => (p.$on ? "linear-gradient(#ffc078, #ffe2b8)" : "linear-gradient(#c3d8f8, #a9c6f2)")};
  white-space: nowrap;
`;

/* ---------- units ---------- */
const UnitRow = styled.div`
  flex: none; display: grid; grid-template-columns: repeat(7, minmax(0, 1fr)); border-left: 2px solid #808080; height: 91px; background: #000;
`;
const Unit = styled.article`
  display: grid; grid-template-rows: 56px 1fr; border-right: 1px solid #b0b0b0; color: #00f000; font: 11px/14px ${SANS}; min-width: 0;
`;
const UnitWave = styled.div<{ $sel?: boolean }>`
  position: relative; display: flex; flex-direction: column; justify-content: space-between; align-items: flex-end; padding: 2px 1px 1px 0;
  border-bottom: 1px solid #b0b0b0;
  ${(p) => p.$sel && css`background: #400040; border: 1px solid #f0f; padding: 1px 0 0;`}
  > span { padding-right: 3px; z-index: 1; }
`;
const UnitHist = styled.div`position: relative; text-align: right; padding: 3px 2px 0; > span { position: relative; }`;
const Backdrop = styled.svg`position: absolute; inset: 0; width: 100%; height: 100%;`;
const Spin = styled.div<{ $w: number; $h: number }>`
  position: relative; display: flex; flex: none; width: ${(p) => p.$w}px; height: ${(p) => p.$h}px; background: #fff; color: #000;
  input { flex: 1; min-width: 0; border: 0; background: none; text-align: right; outline: 0; padding-right: 1px; }
`;
const SpinButtons = styled.div`display: flex; flex-direction: column; width: 16px; flex: none;`;
const SpinButton = styled.button<{ $down?: boolean }>`
  flex: 1; display: flex; align-items: center; justify-content: center; background: #f0f0f0; border: 1px solid #a0a0a0;
  &::after { content: ""; border: 3px solid transparent; ${(p) => (p.$down ? "border-top-color: #000; border-bottom: 0;" : "border-bottom-color: #000; border-top: 0;")} }
`;
const SpinBox = ({ id, w, h, value, label }: { id?: string; w: number; h: number; value: string; label?: string }) => (
  <Spin $w={w} $h={h}>
    <input id={id} aria-label={label} defaultValue={value} />
    <SpinButtons><SpinButton type="button" aria-label="Increase" /><SpinButton type="button" $down aria-label="Decrease" /></SpinButtons>
  </Spin>
);
interface UnitInfo { name: string; spikes: number; color: string; amp: number; peak: number; decay: number; floor: number; up: number; spread: number }
const UNITS: UnitInfo[] = [
  { name: "", spikes: 453, color: "#c0c0c0", amp: 5, peak: 1, decay: 16, floor: 2, up: 2, spread: 5 },
  { name: "Unit a", spikes: 770, color: "#ffff00", amp: 8, peak: 14, decay: 62, floor: 4, up: 2, spread: 2 },
  { name: "Unit b", spikes: 597, color: "#00ff00", amp: 2, peak: 3, decay: 20, floor: 3, up: 1, spread: 3 },
  { name: "Unit c", spikes: 508, color: "#00ffff", amp: 3, peak: 8, decay: 20, floor: 2, up: 2, spread: 2 },
  { name: "Unit d", spikes: 491, color: "#ff0000", amp: 9, peak: 11, decay: 22, floor: 1, up: 5, spread: 2 },
  { name: "Unit e", spikes: 407, color: "#c0c000", amp: 4, peak: 5, decay: 30, floor: 2, up: 1, spread: 2 },
  { name: "Unit f", spikes: 129, color: "#00c000", amp: 11, peak: 5, decay: 20, floor: 0, up: 7, spread: 3 },
];
const UnitCell = ({ unit, index }: { unit: UnitInfo; index: number }) => {
  const sel = index === 6;
  const wave = (off: number, gain: number) => {
    const pts: string[] = [];
    for (let x = 10; x <= 187; x += 4) {
      const g = (c: number, w: number) => Math.exp(-Math.pow((x - c) / w, 2));
      pts.push(`${x},${(27 + off + gain * (unit.amp * 1.25 * g(64, 13) - unit.up * g(42, 10) - unit.up * g(90, 16))).toFixed(1)}`);
    }
    return pts.join(" ");
  };
  const r = rng(index * 31 + 5);
  let d = "";
  for (let x = 0; x < 91; x++) {
    const env = x * 2 < unit.peak ? (x * 2 + 2) / (unit.peak + 2) : Math.exp(-(x * 2 - unit.peak) / (unit.decay * 0.95));
    let h = 29 * env * (0.6 + r() * 0.45) + unit.floor * r() * 1.5;
    if (sel && h < 8) h = r() > 0.72 ? 4 : 0;
    if (Math.abs(x * 2 - unit.peak) < 2) h = 30;
    h = Math.min(30, Math.max(1, Math.round(h)));
    d += `M${4 + x * 2} ${34 - h}h2v${h}h-2z`;
  }
  return (
    <Unit>
      <UnitWave $sel={sel}>
        <Backdrop viewBox="0 0 188 55" preserveAspectRatio="none" shapeRendering="crispEdges" fill="none" stroke={unit.color} aria-hidden="true">
          <polyline points={wave(0, 1)} />
          <polyline points={wave(-unit.spread, 1.1)} strokeDasharray="4 3" />
          <polyline points={wave(unit.spread, 1.1)} strokeDasharray="4 3" />
        </Backdrop>
        <span>{unit.name}</span>
        {unit.name && <SpinBox w={42} h={17} value="70" label={`${unit.name} threshold`} />}
      </UnitWave>
      <UnitHist>
        <Backdrop viewBox="0 0 188 35" preserveAspectRatio="none" shapeRendering="crispEdges" aria-hidden="true">
          <path d="M3.500 0V33" stroke="#f00" strokeDasharray="5 3" />
          <path d={d} fill={unit.color} />
        </Backdrop>
        <span>spikes: {unit.spikes}</span>
      </UnitHist>
    </Unit>
  );
};

/* ---------- events table ---------- */
const EventsBody = styled.div`
  flex: 1 1 0; min-height: 0; overflow: hidden; display: flex; justify-content: space-between; background: #f0f0f0;
  border-left: 1px solid #808080; padding-top: 1px; border-right: 1px solid #fff;
`;
const ScrollTrack = styled.div`width: 18px; border-left: 1px solid #fff; padding: 17px 0 0 8px;`;
const ScrollThumb = styled.div`width: 2px; height: 17px; background: #868686;`;
const Table = styled.table`
  table-layout: fixed; width: 400px; border-collapse: separate; border-spacing: 0; font: 11px/14px ${SANS}; align-self: flex-start;
  th { font-weight: 400; background: #f0f0f0; border-right: 1px solid #000; border-bottom: 1px solid #000; padding: 0; }
  thead th { height: 18px; }
  td { height: 15px; padding: 0 3px 0 0; text-align: right; background: #fff; border-right: 1px dotted #707070; border-bottom: 1px dotted #707070; }
`;
const CheckCell = styled.td`&& { background: #f0f0f0; text-align: center; padding: 0; line-height: 0; border-right-color: #f0f0f0; }`;
const ColorCell = styled.td<{ $sel?: boolean }>`
  && { background: #f00; ${(p) => p.$sel && css`border: 1px solid #0ff;`} }
`;
const Check = styled.input`
  appearance: none; flex: none; width: 13px; height: 13px; border: 1px solid #606060; border-radius: 3px; background: #f6f6f6; vertical-align: top;
`;
const EVENTS = Array.from({ length: 38 }, (_, i) => {
  if (i < 2) return { ch: 258 + i, name: i ? "Stop" : "Start", count: 1 };
  if (i < 10) return { ch: i - 1, name: `KBD${i - 1}`, count: 0 };
  const n = i - 9;
  return { ch: n, name: `EVT${String(n).padStart(2, "0")}`, count: n <= 8 ? 128 : 0 };
});

/* ---------- timeline ---------- */
const TimelineBody = styled.div`
  display: grid; grid-template-columns: 229px 32px minmax(0, 1fr); grid-template-rows: 249px 24px; padding: 6px 4px 3px 0;
  background: #f0f0f0; border-left: 2px solid #808080; font: 11px/14px ${SANS};
`;
const Controls = styled.form`display: flex; flex-direction: column; padding-left: 5px;`;
const Line = styled.div<{ $h: number; $gap?: number; $pad?: number }>`
  display: flex; align-items: center; justify-content: flex-end; height: ${(p) => p.$h}px; gap: ${(p) => p.$gap ?? 4}px;
  padding-right: ${(p) => p.$pad ?? 0}px; white-space: nowrap;
  label { display: flex; align-items: center; gap: 3px; }
`;
const Stack = styled.div`display: flex; flex-direction: column; gap: 3px;`;
const Readout = styled.output<{ $w: number; $left?: boolean }>`
  display: block; flex: none; width: ${(p) => p.$w}px; height: 17px; line-height: 15px; border: 1px solid; border-color: #a0a0a0 #fff #fff #a0a0a0;
  text-align: ${(p) => (p.$left ? "left" : "right")}; white-space: nowrap;
  ${Spin} + & { margin-left: 9px; }
`;
const PushButton = styled.button<{ $w: number; $h?: number }>`
  flex: none; width: ${(p) => p.$w}px; height: ${(p) => p.$h ?? 21}px; background: #fdfdfd; border: 1px solid #d0d0d0; border-bottom-color: #b4b4b4; border-radius: 4px;
`;
const Field = styled.input<{ $w: number }>`
  width: ${(p) => p.$w}px; height: 20px; border: 1px solid #f8f8f8; border-bottom-color: #868686; background: #fff; padding: 0 3px; outline: 0;
  &:disabled { color: #808080; background: #f0f0f0; border-color: #fafafa; }
`;
const Drop = styled.label<{ $w: number }>`
  width: ${(p) => p.$w}px; height: 21px; background: #fff; border: 1px solid #d0d0d0; border-bottom-color: #b4b4b4; padding-right: 3px;
  select { appearance: none; flex: 1; min-width: 0; border: 0; background: none; padding-left: 3px; outline: 0; }
  select:disabled { opacity: 1; color: #808080; }
  svg { width: 9px; height: 6px; }
`;
const Chevron = ({ color }: { color: string }) => <svg viewBox="0 0 9 6"><path d="M1 1l3.500 3.500L8 1" fill="none" stroke={color} /></svg>;
const ThresholdSlider = styled.input`
  appearance: none; writing-mode: vertical-lr; width: 20px; height: 241px; margin: 4px 0 0 5px; background: none;
  &::-webkit-slider-runnable-track { width: 4px; height: 241px; background: #e7eaea; border: 1px solid #d0d4d4; margin: auto; }
  &::-webkit-slider-thumb {
    appearance: none; width: 19px; height: 11px; margin-left: -8px; background: #0078d7;
    clip-path: polygon(0 0, 70% 0, 100% 50%, 70% 100%, 0 100%);
  }
`;
const Traces = styled.div`display: flex; flex-direction: column; gap: 4px; background: #fff; border-top: 1px solid #808080; border-left: 1px solid #808080;`;
const TraceTop = styled(Plot)`flex: 0 0 60px;`;
const ScrollRow = styled.div`
  grid-column: 1 / -1; display: flex; align-items: center; gap: 4px; padding-left: 12px; white-space: nowrap;
  label { display: flex; align-items: center; gap: 4px; }
`;
const ButtonPair = styled.div`display: flex; gap: 1px; padding-left: 1px;`;
const RangeSlider = styled.input`
  appearance: none; flex: 1; height: 18px; background: none; border-top: 1px solid #fff; align-self: flex-end;
  &::-webkit-slider-thumb { appearance: none; width: 17px; height: 3px; background: #868686; }
`;
const SmallGap = styled.span`width: 10px;`;

const TimelineTrace = () => {
  const r = rng(9);
  const pts: string[] = [];
  let v = 0;
  for (let x = 0; x <= 1625; x += 3) {
    v = v * 0.45 + (r() - 0.5) * 6;
    if (r() > 0.985) v -= 7;
    const inSpike = [826, 1108].some((c) => Math.abs(x - c) < 9);
    if (!inSpike) pts.push(`${x},${(92 + v).toFixed(0)}`);
    if (x === 816 || x === 1098) {
      const c = x === 816 ? 826 : 1108;
      pts.push(`${c - 7},90`, `${c - 4},78`, `${c - 2},84`, `${c},123`, `${c + 2},96`, `${c + 4},75`, `${c + 6},84`, `${c + 8},95`);
    }
  }
  return (
    <Traces>
      <TraceTop viewBox="0 0 1625 60" preserveAspectRatio="none" shapeRendering="crispEdges" role="img" aria-label="Detected spikes">
        {[816, 1099].map((x) => <path key={x} d={`M${x} 31h2l2-8h2l1 8 1 10 2-10 2-8 2 2 2 7h3l2-1h4`} stroke="#ff0" fill="none" />)}
      </TraceTop>
      <Plot viewBox="0 0 1625 185" preserveAspectRatio="none" shapeRendering="crispEdges" role="img" aria-label="Continuous signal">
        <path d="M0 99.500H1625" stroke="#f00" />
        <polyline points={pts.join(" ")} stroke="#fff" fill="none" />
      </Plot>
    </Traces>
  );
};

/* ---------- side tool bars, status bar ---------- */
const SideColumn = styled.aside`display: flex; flex-direction: column; gap: 4px; padding-top: 2px;`;
const SideBar = styled.div<{ $last?: boolean }>`
  display: flex; flex-direction: column; align-items: center; padding-top: 4px; border-radius: 3px; overflow: hidden; flex: none;
  background: linear-gradient(90deg, #dce9fc, #c3d8f7 60%, #7ea6e4);
  ${(p) => p.$last && css`margin-top: 8px;`}
`;
const SideTools = styled.div`display: flex; flex-direction: column; align-items: center; padding: 3px 0 1px;`;
const SideSep = styled.span`width: 15px; height: 2px; margin: 2px 0; background: linear-gradient(#5f88cf 50%, #fff 50%);`;
const SideMore = styled.button`
  display: flex; align-items: center; justify-content: flex-end; width: 100%; height: 11px; padding-right: 4px; background: linear-gradient(90deg, #4a80e0, #0a3d9c);
  &::after { content: ""; border: 4px solid transparent; border-left-color: #fff; border-right: 0; }
`;
const SIDE: string[][] = [
  ["addUnit", "del", "delAll", "b1", "b2", "b3", "b4", "b5"],
  ["findUnit", "wfAdd", "|", "wf1", "wf2", "wf3", "|", "out1", "out2", "in1", "in2", "|", "stop"],
  ["prop1", "*prop2", "|", "eye1", "eye2", "eye3"],
  ["zxo", "zxi", "zyo", "zyi", "zzo", "zzi", "|", "z1", "|", "mxl", "mxr", "myu", "myd", "mzu", "mzd"],
];
const StatusBar = styled.footer`
  display: flex; align-items: center; flex: none; height: 20px; padding: 0 1px 0 3px; background: #f0f0f0; border-top: 1px solid #d0d0d0;
  > p { flex: 1; }
`;
const StatusCell = styled.span`padding: 0 5px 0 7px; border-left: 1px solid #d4d4d4; white-space: nowrap; &:first-of-type { border-left: 0; }`;

/* ---------- popup menus ---------- */
const Popup = styled.div<{ $x: number; $y: number; $w: number }>`
  position: absolute; z-index: 5; left: ${(p) => p.$x}px; top: ${(p) => p.$y}px; width: ${(p) => p.$w}px;
  border: 1px solid #002d96; box-shadow: 3px 3px 4px rgba(0, 0, 60, 0.35);
  background: linear-gradient(90deg, #e0ecfe, #c0d6f7 14px, #87ade8 28px, #f5f5f5 28px);
`;
const TearOff = styled.div`
  display: flex; align-items: center; justify-content: center; height: 9px; margin-bottom: 1px; background: #b0cbf5;
  &::after { content: ""; width: 62px; height: 2px; background: repeating-linear-gradient(90deg, #16306a 0 2px, transparent 2px 4px); }
`;
const ItemButton = styled.button<{ $hot?: boolean }>`
  display: grid; grid-template-columns: 20px 1fr auto; column-gap: 12px; align-items: center; width: 100%; height: 23px; padding: 0 9px 0 2px; text-align: left;
  border: 1px solid ${(p) => (p.$hot ? "#000080" : "transparent")};
  background: ${(p) => (p.$hot ? "#ffeec2" : "none")};
`;
const Mark = styled.span<{ $on?: boolean }>`
  display: flex; align-items: center; justify-content: center; width: 20px; height: 20px;
  border: 1px solid ${(p) => (p.$on ? "#000080" : "transparent")};
  background: ${(p) => (p.$on ? "#ffbf72" : "none")};
`;
const MenuRule = styled.li`height: 1px; margin: 1px 0 1px 36px; background: #5f88cf;`;
interface Item { label: string; icon?: string; checked?: boolean; sub?: boolean; hot?: boolean }
const VIEW_ITEMS: (Item | null)[] = [
  { label: "Info Grid Views", sub: true, hot: true },
  { label: "Control Grid", checked: true }, { label: "Units", checked: true }, { label: "Waveforms", checked: true }, { label: "Timeline", checked: true },
  { label: "2D Clusters", icon: "clusters", checked: true }, { label: "3D Clusters", icon: "three", checked: true },
  { label: "Clusters vs Time", icon: "clustime" }, { label: "Continuous Frequency Spectrum", icon: "fft" }, { label: "Cross-Correlograms", icon: "cross" },
  { label: "Feature vs Feature", icon: "fvf" }, { label: "ISI Histograms", icon: "isi" }, { label: "Overlaps Analysis", icon: "overlaps" },
  { label: "PCA Results", icon: "pca" }, { label: "Rasters", icon: "rasters" }, { label: "Scan Graph", icon: "scan" }, { label: "Sorting Summary", icon: "summary" },
  { label: "Sort Quality vs Time Segment Graph", icon: "sortq" }, { label: "Surface", icon: "surface", checked: true }, { label: "Templates vs Time", icon: "templ" },
  { label: "Threshold Scan Graph", icon: "thrscan" }, { label: "Waveform Detection", icon: "wfdet", checked: true }, { label: "Waveform Inspection", icon: "inspect" },
  { label: "Waveforms (Legacy)" }, null, { label: "Animate", sub: true },
];
const GRID_ITEMS: Item[] = [
  { label: "Sources" }, { label: "Channels", icon: "sheet", checked: true }, { label: "Channel Parameters" }, { label: "File Summary" }, { label: "Time Segments" },
  { label: "Sort Details", checked: true }, { label: "Events", checked: true }, { label: "Stats" }, { label: "PCA" }, { label: "Scan" }, { label: "Threshold Scan" },
  { label: "Templates", hot: true }, { label: "Adaptive Templates History" }, { label: "Channel Map" }, { label: "Messages" },
];
const GridList = styled.ul`padding: 1px 0;`;
const ArrowGlyph = styled.svg`width: 5px; height: 8px;`;
const MenuItem = ({ item }: { item: Item }) => (
  <li>
    <ItemButton $hot={item.hot}>
      <Mark $on={item.checked}>
        {item.icon ? <Icon name={item.icon} /> : item.checked && <svg width="10" height="10" viewBox="0 0 10 10"><path d="M1 4.500l3 3.500L9 1" stroke="#000" strokeWidth="2" fill="none" /></svg>}
      </Mark>
      <span>{item.label}</span>
      {item.sub && <ArrowGlyph viewBox="0 0 5 8"><path d="M0 0l4.500 4L0 8z" /></ArrowGlyph>}
    </ItemButton>
  </li>
);

/* ---------- tutorial callouts over the window ---------- */
const CalloutBox = styled.div<{ $x: number; $y: number; $w: number; $h: number }>`
  position: absolute; z-index: 8; pointer-events: none; border: 4px solid #ff0d00;
  left: ${(p) => p.$x}px; top: ${(p) => p.$y}px; width: ${(p) => p.$w}px; height: ${(p) => p.$h}px;
`;
const CalloutDot = styled.span<{ $x: number; $y: number }>`
  position: absolute; z-index: 9; left: ${(p) => p.$x}px; top: ${(p) => p.$y}px; width: 18px; height: 18px; border-radius: 50%;
  background: #ff0d00; color: #fff; font: 11px/18px ${SANS}; text-align: center;
`;

const Tools = ({ names }: { names: string[] }) => (
  <>
    {names.map((n, i) => n === "|" ? <ToolSep key={i} /> : (
      <ToolButton key={i} $on={n[0] === "*"} aria-label={n.replace("*", "")}><Icon name={n.replace("*", "")} /></ToolButton>
    ))}
  </>
);
const MENUS = ["File", "Edit", "View", "Select", "Waveforms", "Sort", "Units", "Tools", "Window", "Run", "Help"];

export default function App() {
  return (
    <Page>
      <GlobalStyle />
      <TitleBar>
        <Icon name="app" />
        <h1>Plexon Offline Sorter - 4chDemoPL2.pl2</h1>
        <WindowButtons>
          <WinButton aria-label="Minimize"><svg viewBox="0 0 12 12"><path d="M1 6.500h10" stroke="#000" /></svg></WinButton>
          <WinButton aria-label="Restore"><svg viewBox="0 0 12 12"><path d="M1.500 3.500h7v8h-7zM3.500 3V1.500h7V10H9" fill="none" stroke="#000" /></svg></WinButton>
          <WinButton aria-label="Close"><svg viewBox="0 0 12 12"><path d="M1 1l10 10M11 1L1 11" stroke="#000" /></svg></WinButton>
        </WindowButtons>
      </TitleBar>
      <MenuBar>
        <Grip />
        {MENUS.map((m) => <MenuButton key={m} $open={m === "View"}>{m}</MenuButton>)}
      </MenuBar>
      <ToolRow>
        <ToolBar $grow>
          <Grip />
          <Tools names={["open", "save", "|", "cut"]} />
          <Spring />
          <Tools names={["*clusters", "*three", "*surface", "inspect", "*wfdet", "fvf", "summary", "pca", "isi", "cross", "rasters", "scan", "clustime", "sortq", "templ", "fft", "thrscan", "overlaps"]} />
          <More />
        </ToolBar>
        <ToolBar>
          <Grip />
          <Tools names={["lC", "rC", "|", "lU", "rU", "|", "lW", "rW", "|", "lS", "rS"]} />
          <More />
        </ToolBar>
        <ToolBar>
          <Grip />
          <Tools names={["pcaText", "|"]} />
          <ToolCombo w={108} label="X axis" value="X Axis: PC 1" />
          <ToolCombo w={108} label="Y axis" value="Y Axis: PC 2" />
          <ToolCombo w={108} label="Z axis" value="Z Axis: PC 3" end />
          <Tools names={["|", "*ax1", "ax2", "ax3"]} />
          <More />
        </ToolBar>
        <ToolBar>
          <Grip />
          <Tools names={["play", "pause", "|", "rewind"]} />
          <span>1X</span>
          <Tools names={["forward", "start", "rec", "|"]} />
          <ToolCombo w={60} label="Speed" value="1 X" end />
          <Tools names={["*loop"]} />
          <More />
        </ToolBar>
      </ToolRow>
      <Workspace>
        <Docks>
          <Upper>
            <LeftDock>
              <DockRow>
                <Panel>
                  <Caption title="Control Grid" tools={["Pin", "Close"]} />
                  <PropertyList>{PROPERTIES.map((p) => <Property key={p} $sub={p.startsWith("Range")}>{p}</Property>)}</PropertyList>
                </Panel>
                <Panel>
                  <Caption title="Waveforms" tools={["Menu", "Pin", "Close"]} />
                  <WaveTools>
                    <WaveToolBar><BigButton><Icon name="inval" />Invalidate Wfs</BigButton><More /></WaveToolBar>
                  </WaveTools>
                  <WaveformPlot />
                </Panel>
                <Panel>
                  <Caption title="Surface" tools={["Menu", "Pin", "Maximize", "Close"]} />
                  <SurfacePlot />
                  <Tabs>
                    <Tab><Icon name="clusters" />Sorter</Tab>
                    <Tab><Icon name="three" />3D Clusters</Tab>
                    <Tab $on><Icon name="surface" />Surface</Tab>
                    <Tab><Icon name="wfdet" />Waveform Detection</Tab>
                  </Tabs>
                </Panel>
              </DockRow>
              <Panel>
                <Caption title="Units" tools={["Pin", "Close"]} h={25} />
                <UnitRow>{UNITS.map((u, i) => <UnitCell key={i} unit={u} index={i} />)}</UnitRow>
              </Panel>
            </LeftDock>
            <Panel>
              <Caption title="Events" tools={["Pin", "Close"]} />
              <EventsBody>
                <Table>
                  <colgroup><col width="20" /><col width="50" /><col width="150" /><col width="50" /><col width="50" /><col width="80" /></colgroup>
                  <thead><tr><th /><th>Event Ch</th><th>Name</th><th>Count</th><th>Show</th><th>Display Color</th></tr></thead>
                  <tbody>
                    {EVENTS.map((e, i) => (
                      <tr key={i}>
                        <th scope="row">{i + 1}</th><td>{e.ch}</td><td>{e.name}</td><td>{e.count}</td>
                        <CheckCell><Check type="checkbox" aria-label={`Show ${e.name}`} /></CheckCell>
                        <ColorCell $sel={i === 36} />
                      </tr>
                    ))}
                  </tbody>
                </Table>
                <ScrollTrack><ScrollThumb /></ScrollTrack>
              </EventsBody>
              <Tabs>
                <Tab><Icon name="sheet" />Channels</Tab>
                <Tab $on>Events</Tab>
                <Tab>Sorting Details</Tab>
              </Tabs>
            </Panel>
          </Upper>
          <Panel>
            <Caption title="Timeline" tools={["Pin", "Close"]} h={24} />
            <TimelineBody>
              <Controls onSubmit={(e) => e.preventDefault()}>
                <Line $h={34} $gap={8}>
                  <span>Showing:</span>
                  <Stack><Readout $w={134} $left>Cont.: Ch. 65 'WB01'</Readout><Readout $w={134} /></Stack>
                  <PushButton type="button" $w={24}>...</PushButton>
                </Line>
                <Line $h={29} $gap={14} $pad={16}>
                  <label><Check type="checkbox" />Control Displays</label>
                  <label><Check type="checkbox" />Center Selected</label>
                </Line>
                <Line $h={29} $pad={18}>
                  <label htmlFor="zoom">Zoom</label><SpinBox id="zoom" w={61} h={22} value="1.0" />
                  <Readout $w={62}>20.00 mV</Readout>
                </Line>
                <Line $h={31} $pad={18}>
                  <label htmlFor="thr">Thr. (%)</label><SpinBox id="thr" w={61} h={22} value="-8.18" />
                  <Readout $w={62}>-1637 礦</Readout>
                </Line>
                <Line $h={32}>
                  <span>Detect Waveforms</span>
                  <PushButton type="button" $w={66}>Options...</PushButton><PushButton type="button" $w={58}>Detect</PushButton>
                </Line>
                <Line $h={29} $gap={6}>
                  <span>Low-cut Filter</span>
                  <Drop $w={81}><select aria-label="Low-cut filter"><option>Butterworth</option></select><Chevron color="#444" /></Drop>
                  <Drop $w={58}><select aria-label="Filter poles" disabled><option>4-pole</option></select><Chevron color="#b0b0b0" /></Drop>
                </Line>
                <Line $h={29} $gap={6}>
                  <label htmlFor="cutoff">Cutoff Freq</label>
                  <Field id="cutoff" $w={58} defaultValue="250" disabled /><span>Hz</span><span /><PushButton type="button" $w={58}>Apply</PushButton>
                </Line>
              </Controls>
              <ThresholdSlider type="range" aria-label="Threshold" min={0} max={100} defaultValue={54} />
              <TimelineTrace />
              <ScrollRow>
                <label>Scroll Range<Field $w={62} defaultValue="0.0626" /></label>
                <SmallGap />
                <Readout $w={52}>18.3669</Readout>
                <ButtonPair>
                  <PushButton type="button" $w={57} $h={19}>Zoom Out</PushButton>
                  <PushButton type="button" $w={57} $h={19}>Zoom In</PushButton>
                </ButtonPair>
                <RangeSlider type="range" aria-label="Scroll position" min={0} max={1000} defaultValue={604} />
                <Readout $w={54}>18.4295</Readout>
              </ScrollRow>
            </TimelineBody>
          </Panel>
        </Docks>
        <SideColumn>
          {SIDE.map((bar, b) => (
            <SideBar key={b} $last={b === 3}>
              <Grip $wide />
              <SideTools>
                {bar.map((n, i) => n === "|" ? <SideSep key={i} /> : (
                  <ToolButton key={i} $on={n[0] === "*"} aria-label={n.replace("*", "")}><Icon name={n.replace("*", "")} /></ToolButton>
                ))}
              </SideTools>
              <SideMore aria-label="More tools" />
            </SideBar>
          ))}
        </SideColumn>
      </Workspace>
      <StatusBar>
        <p>For Help, press F1</p>
        {["Free Mem: 45903 / 65277 M", "Dropped: None", "t: 12.559", "V: 12.24 mV", "X:", "Y:", "Z:"].map((s) => <StatusCell key={s}>{s}</StatusCell>)}
      </StatusBar>

      <Popup $x={88} $y={47} $w={281}>
        <TearOff />
        <ul>{VIEW_ITEMS.map((it, i) => it ? <MenuItem key={i} item={it} /> : <MenuRule key={i} />)}</ul>
      </Popup>
      <Popup $x={369} $y={58} $w={230}>
        <GridList>{GRID_ITEMS.map((it) => <MenuItem key={it.label} item={it} />)}</GridList>
      </Popup>
      <CalloutBox $x={83} $y={14} $w={61} $h={33} />
      <CalloutBox $x={108} $y={55} $w={126} $h={30} />
      <CalloutDot $x={65} $y={22}>1</CalloutDot>
      <CalloutDot $x={70} $y={62}>2</CalloutDot>
    </Page>
  );
}
